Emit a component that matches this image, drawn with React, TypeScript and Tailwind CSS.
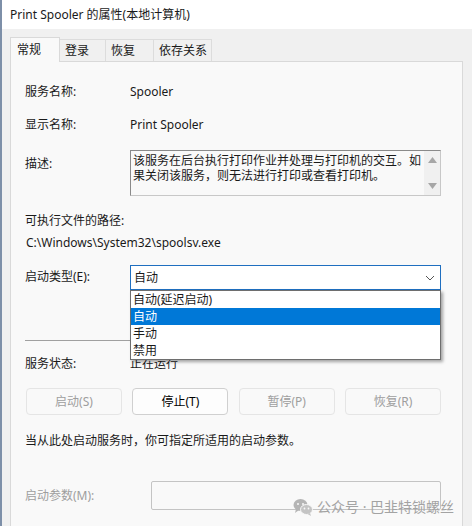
const font = { fontFamily: '"Noto Sans", "Noto Sans CJK SC", sans-serif' }

function Tab({ label, w, active }: { label: string; w: string; active?: boolean }) {
  if (active) {
    return (
      <div className={`relative z-10 -mb-px flex h-[25px] items-center border border-b-0 border-[#d9d9d9] bg-[#f9f9f9] pl-[6px] ${w}`}>
        {label}
      </div>
    )
  }
  return (
    <div className={`flex h-[22px] items-center border border-l-0 border-b-0 border-[#dcdcdc] bg-[#f0f0f0] pl-[5px] ${w}`}>
      {label}
    </div>
  )
}

function Btn({ label, enabled }: { label: string; enabled?: boolean }) {
  return (
    <div
      className={
        enabled
          ? 'flex h-[27px] w-[96px] items-center justify-center rounded-[4px] border border-[#d0d0d0] bg-[#fdfdfd] text-black'
          : 'flex h-[27px] w-[96px] items-center justify-center rounded-[4px] border border-[#e5e5e5] bg-[#f9f9f9] text-[#9e9e9e]'
      }
    >
      {label}
    </div>
  )
}

function WeChat() {
  return (
    <svg width="20" height="18" viewBox="0 0 20 18">
      <ellipse cx="7.5" cy="7" rx="7" ry="6" fill="#b5b5b5" />
      <path d="M3 11 L2 15 L6 12 Z" fill="#b5b5b5" />
      <circle cx="5" cy="6" r="1" fill="#f9f9f9" />
      <circle cx="10" cy="6" r="1" fill="#f9f9f9" />
      <ellipse cx="13.5" cy="11.5" rx="6" ry="5" fill="#c4c4c4" stroke="#f9f9f9" strokeWidth="1" />
      <path d="M17 15 L18 18 L14.5 16 Z" fill="#c4c4c4" />
      <circle cx="11.5" cy="10.5" r="0.9" fill="#f9f9f9" />
      <circle cx="15.5" cy="10.5" r="0.9" fill="#f9f9f9" />
    </svg>
  )
}

export default function App() {
  return (
    <div
      className="relative h-[526px] w-[472px] overflow-hidden border-l-2 border-[#7d8fa8] bg-[#f0f0f0] text-[12px] leading-[16px] text-[#1a1a1a]"
      style={font}
    >
      {/* title bar */}
      <div className="flex h-[29px] items-center bg-white pl-[8px]">
        Print Spooler 的属性(本地计算机)
      </div>

      {/* tabs */}
      <div className="ml-[8px] mt-[8px] flex items-end">
        <Tab label="常规" w="w-[50px]" active />
        <Tab label="登录" w="w-[46px]" />
        <Tab label="恢复" w="w-[48px]" />
        <Tab label="依存关系" w="w-[58px]" />
      </div>

      {/* panel */}
      <div className="ml-[8px] mr-[9px] h-[480px] border border-[#d9d9d9] bg-[#f9f9f9] pl-[14px] pr-[21px] pt-[22px]">
        <div className="flex">
          <div className="w-[105px]">服务名称:</div>
          <div>Spooler</div>
        </div>
        <div className="mt-[17px] flex">
          <div className="w-[105px]">显示名称:</div>
          <div>Print Spooler</div>
        </div>
        <div className="mt-[17px] flex">
          <div className="w-[105px] pt-[6px]">描述:</div>
          <div className="flex h-[46px] flex-1 border border-[#8a8a8a] border-r-[#c8c8c8] border-b-[#c8c8c8] bg-[#f9f9f9]">
            <div className="flex-1 pl-[2px] pt-[2px] leading-[15px]">
              该服务在后台执行打印作业并处理与打印机的交互。如
              <br />
              果关闭该服务，则无法进行打印或查看打印机。
            </div>
            <div className="flex w-[16px] flex-col items-center justify-between bg-[#f0f0f0] py-[6px]">
              <svg width="9" height="6" viewBox="0 0 9 6">
                <path d="M0 6 L4.5 0 L9 6 Z" fill="#a6a6a6" />
              </svg>
              <svg width="9" height="6" viewBox="0 0 9 6">
                <path d="M0 0 L4.5 6 L9 0 Z" fill="#a6a6a6" />
              </svg>
            </div>
          </div>
        </div>
        <div className="mt-[17px]">可执行文件的路径:</div>
        <div className="mt-[6px] pl-[1px]">C:\Windows\System32\spoolsv.exe</div>

        <div className="mt-[14px] flex">
          <div className="w-[105px] pt-[4px]">启动类型(E):</div>
          <div className="relative flex-1">
            <div className="flex h-[25px] items-center justify-between border border-[#1f6fc0] bg-white pl-[3px] pr-[5px]">
              <span>自动</span>
              <svg width="10" height="6" viewBox="0 0 10 6">
                <path d="M1 1 L5 5 L9 1" fill="none" stroke="#555" strokeWidth="1" />
              </svg>
            </div>
            {/* open dropdown list */}
            <div className="absolute left-0 right-0 top-full z-20 border border-[#6e6e6e] bg-white shadow-[2px_2px_3px_rgba(0,0,0,0.35)]">
              <div className="h-[17px] pl-[2px] leading-[17px]">自动(延迟启动)</div>
              <div className="h-[17px] bg-[#0078d7] pl-[2px] leading-[17px] text-white">自动</div>
              <div className="h-[17px] pl-[2px] leading-[17px]">手动</div>
              <div className="h-[17px] pl-[2px] leading-[17px]">禁用</div>
            </div>
          </div>
        </div>

        <div className="mt-[50px] h-px bg-[#a0a0a0]" />

        <div className="mt-[15px] flex">
          <div className="w-[105px]">服务状态:</div>
          <div>正在运行</div>
        </div>

        <div className="mt-[16px] flex justify-between pl-px">
          <Btn label="启动(S)" />
          <Btn label="停止(T)" enabled />
          <Btn label="暂停(P)" />
          <Btn label="恢复(R)" />
        </div>

        <div className="mt-[18px]">当从此处启动服务时，你可指定所适用的启动参数。</div>

        <div className="mt-[32px] flex items-center">
          <div className="w-[126px] text-[#9e9e9e]">启动参数(M):</div>
          <div className="h-[29px] flex-1 rounded-[2px] border border-[#c4c4c4] bg-[#f9f9f9]" />
        </div>
      </div>

      {/* watermark */}
      <div className="absolute left-[291px] top-[497px] z-30 flex items-center gap-[4px] text-[14px] leading-[20px] text-[#a3a3a3]">
        <WeChat />
        <span>公众号 · 巴韭特锁螺丝</span>
      </div>
    </div>
  )
}
